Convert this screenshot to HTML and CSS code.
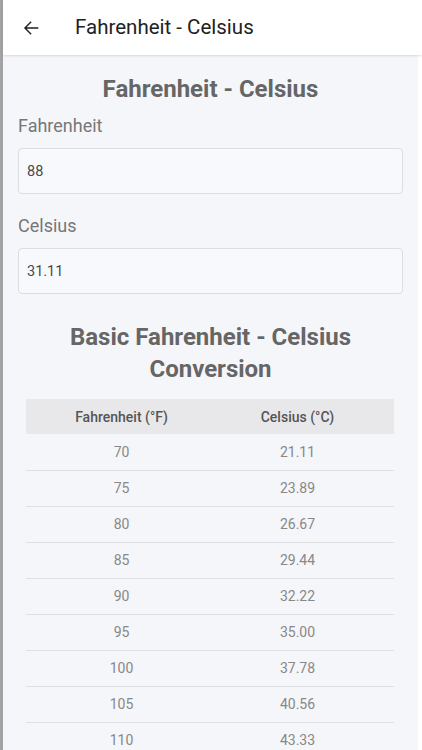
FILE: index.html
```html
<!DOCTYPE html>
<html lang="en">
<head>
    <meta charset="UTF-8">
    <meta name="viewport" content="width=device-width, initial-scale=1.0">
    <title>Fahrenheit - Celsius</title>
    <link rel="stylesheet" href="styles.css">
</head>
<body>
    <div class="screen">
        <header class="app-bar">
            <button class="back-btn" aria-label="Back">
                <svg width="22" height="22" viewBox="0 0 24 24"><path d="M20 11.2H7.3l5.4-5.4L11.6 4.7 4.3 12l7.3 7.3 1.1-1.1-5.4-5.4H20z" fill="#222"/></svg>
            </button>
            <span class="app-title">Fahrenheit - Celsius</span>
        </header>

        <main class="content">
            <h1>Fahrenheit - Celsius</h1>

            <label class="field-label" for="fahrenheit">Fahrenheit</label>
            <input class="field" id="fahrenheit" type="text" value="88">

            <label class="field-label" for="celsius">Celsius</label>
            <input class="field" id="celsius" type="text" value="31.11">

            <h2>Basic Fahrenheit - Celsius Conversion</h2>

            <table class="conv-table">
                <thead>
                    <tr><th>Fahrenheit (°F)</th><th>Celsius (°C)</th></tr>
                </thead>
                <tbody id="rows"></tbody>
            </table>
        </main>
    </div>

    <script>
        const rows = document.getElementById('rows');
        for (let f = 70; f <= 110; f += 5) {
            const c = ((f - 32) * 5 / 9).toFixed(2);
            const tr = document.createElement('tr');
            tr.innerHTML = `<td>${f}</td><td>${c}</td>`;
            rows.appendChild(tr);
        }
    </script>
</body>
</html>
```

FILE: styles.css
```css
* {
    margin: 0;
    padding: 0;
    box-sizing: border-box;
    font-family: Roboto, 'Noto Sans', sans-serif;
}

body {
    background: #ffffff;
    height: 100vh;
    overflow: hidden;
}

.screen {
    height: 100%;
    border-left: 3px solid #a3a3a3;
    margin-right: 4px;
    background: #f5f6fa;
}

.app-bar {
    height: 55px;
    display: flex;
    align-items: center;
    background: #ffffff;
    box-shadow: 0 1px 2px rgba(0, 0, 0, 0.12);
    margin-right: -4px;
    position: relative;
}

.back-btn {
    background: none;
    border: none;
    width: 22px;
    height: 22px;
    margin-left: 17px;
    display: flex;
}

.app-title {
    margin-left: 33px;
    font-size: 20.5px;
    color: #222;
    margin-top: -1px;
}

.content {
    padding: 20px 15px 0;
}

h1 {
    text-align: center;
    font-size: 24px;
    font-weight: 700;
    color: #666;
    line-height: 28px;
}

.field-label {
    display: block;
    font-size: 18px;
    color: #777;
    margin-top: 11px;
    line-height: 24px;
}

.field {
    display: block;
    width: 100%;
    height: 46px;
    margin-top: 10px;
    padding: 0 8px;
    border: 1px solid #dcdde0;
    border-radius: 4px;
    background: #f8f9fc;
    font-size: 14.5px;
    color: #4a4a4a;
    margin-bottom: 20px;
    outline: none;
}

h2 {
    text-align: center;
    font-size: 24px;
    font-weight: 700;
    color: #666;
    line-height: 32px;
    margin-top: 27px;
    padding: 0 40px;
}

.conv-table {
    width: 368px;
    margin: 14px 0 0 8px;
    border-collapse: collapse;
}

.conv-table th {
    background: #e8e8ea;
    height: 35px;
    font-size: 14px;
    font-weight: 500;
    color: #555;
}

.conv-table td {
    height: 36px;
    font-size: 14px;
    color: #888;
    border-bottom: 1px solid #dedfe2;
}

.conv-table th,
.conv-table td {
    text-align: center;
}

.conv-table th:first-child,
.conv-table td:first-child {
    width: 191px;
}

.conv-table th:last-child,
.conv-table td:last-child {
    padding-right: 16px;
}
```
